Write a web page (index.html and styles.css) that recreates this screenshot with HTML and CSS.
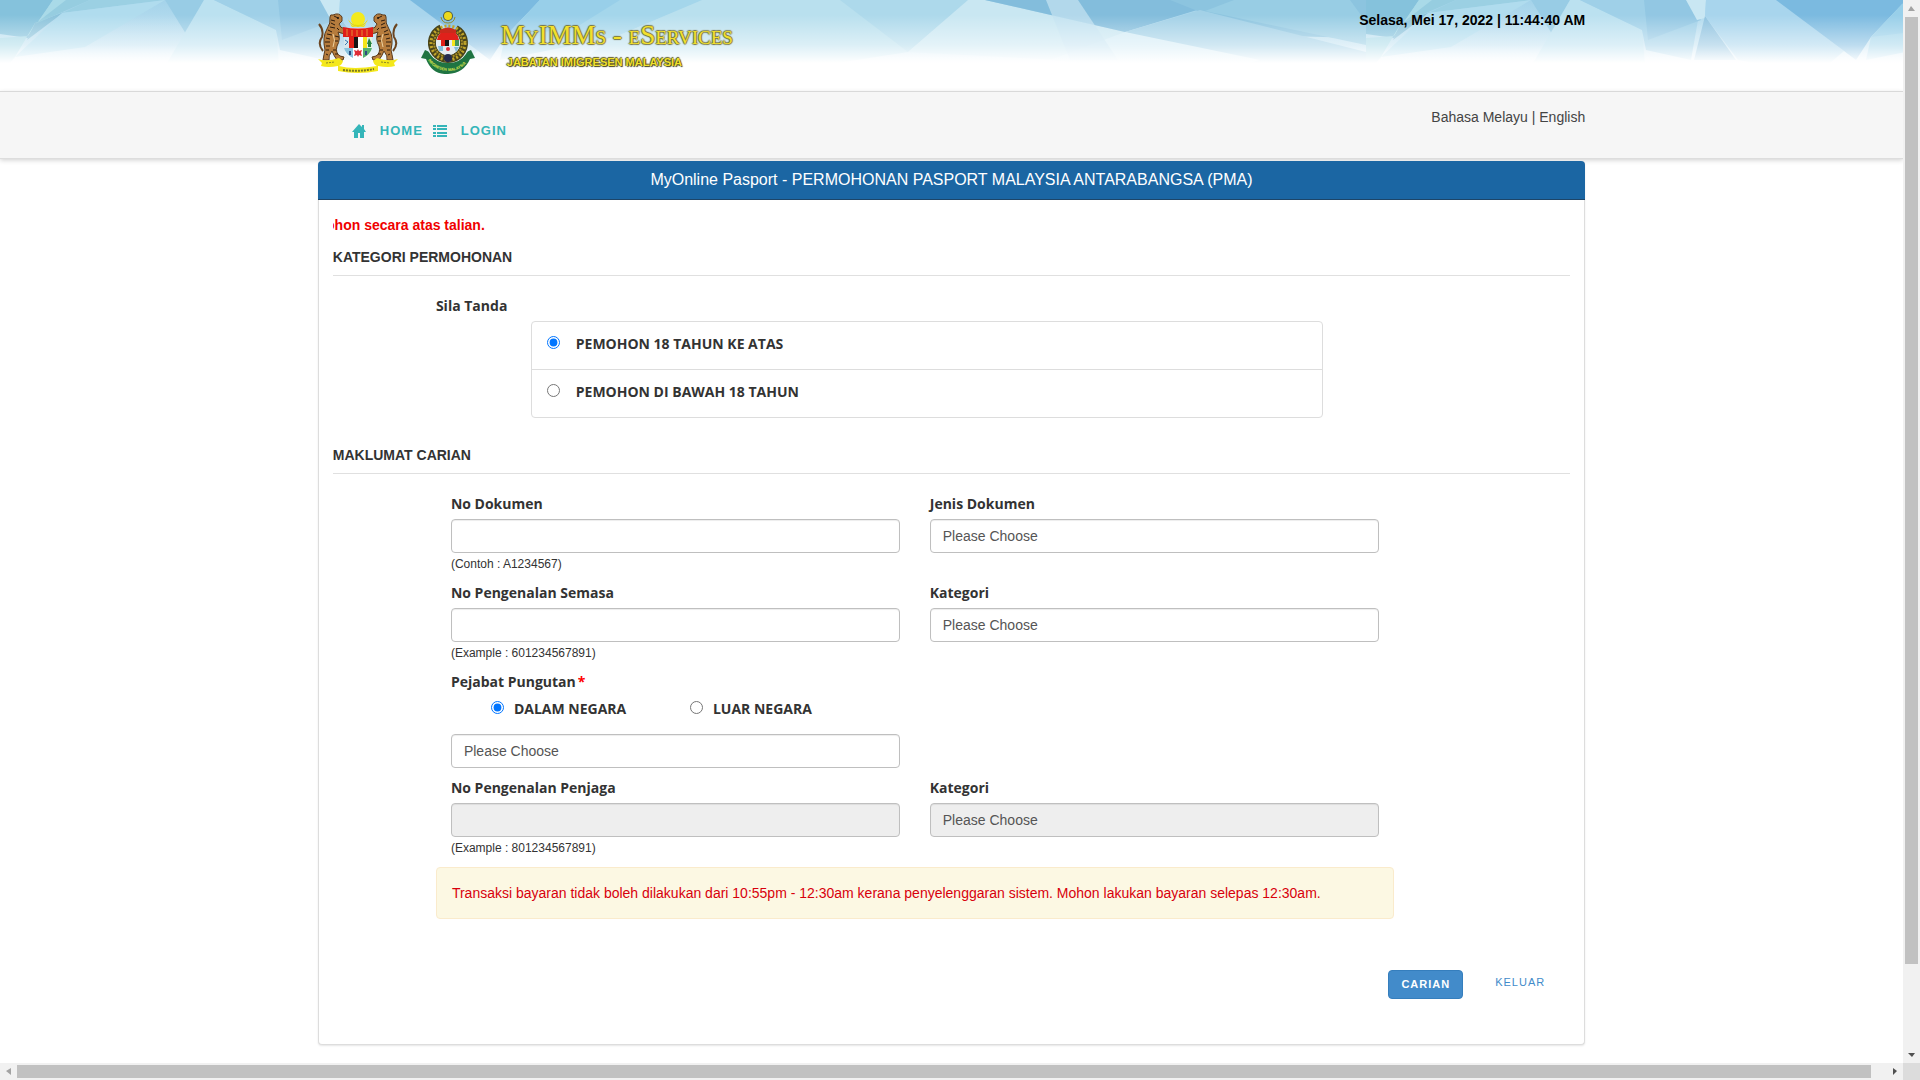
FILE: index.html
```html
<!DOCTYPE html>
<html lang="ms">
<head>
  <meta charset="utf-8">
  <title>MyIMMs - eServices</title>
  <link rel="stylesheet" href="styles.css">
</head>
<body>
<div class="window">
  <div class="page">

    <header class="banner">
      <svg class="banner-bg" width="2732" height="75" viewBox="0 0 2732 75" aria-hidden="true">
        <defs>
          <linearGradient id="sky" x1="0" y1="0" x2="0" y2="1">
            <stop offset="0" stop-color="#a4d3ea"/>
            <stop offset="0.6" stop-color="#c3e3f2"/>
            <stop offset="1" stop-color="#ffffff"/>
          </linearGradient>
          <linearGradient id="fade" x1="0" y1="0" x2="0" y2="1">
            <stop offset="0.2" stop-color="#ffffff" stop-opacity="0"/>
            <stop offset="0.6" stop-color="#ffffff" stop-opacity="0.5"/>
            <stop offset="0.84" stop-color="#ffffff" stop-opacity="1"/>
          </linearGradient>
          <g id="tile">
            <rect width="1366" height="75" fill="url(#sky)"/>
            <polygon points="0,0 53,0 28,38 0,34" fill="#85c2dc"/>
            <polygon points="53,0 66,0 90,0 35,23 15,57 0,75 0,38 28,36" fill="#a9dae8"/>
            <polygon points="35,23 64,12 27,40" fill="#8cc3db"/>
            <polygon points="66,0 90,0 35,24" fill="#96cde0"/>
            <polygon points="90,0 165,0 62,13" fill="#9bd0e3"/>
            <polygon points="62,13 165,0 85,47 15,57" fill="#b0dcee"/>
            <polygon points="165,0 204,0 186,34" fill="#98cce5"/>
            <polygon points="204,0 214,0 276,30 280,75 160,75" fill="#bbe1f0"/>
            <polygon points="214,0 320,0 332,20 325,60 280,50 276,30" fill="#9fd0e8"/>
            <polygon points="278,0 320,0 335,20 282,40" fill="#92c7e3"/>
            <polygon points="320,0 340,0 339,18 331,20" fill="#c9e7f3"/>
            <polygon points="339,16 370,60 328,60" fill="#90c3e0"/>
            <polygon points="340,0 410,0 478,51 450,75 372,60 339,16" fill="#a8d5ed"/>
            <polygon points="410,0 540,0 505,37 490,60 478,51" fill="#7bbae0"/>
            <polygon points="540,0 702,0 615,37 500,60 505,37" fill="#a4d6eb"/>
            <polygon points="540,0 620,0 575,28 505,37" fill="#98cfe9"/>
            <polygon points="702,0 968,0 908,52 760,75 560,75 615,37" fill="#b9e0ee"/>
            <polygon points="840,0 968,0 908,52" fill="#add9eb"/>
            <polygon points="968,0 985,0 1125,32 1060,60 908,52" fill="#c9e7f2"/>
            <polygon points="985,0 1230,0 1125,32" fill="#83bddc"/>
            <polygon points="1170,0 1230,0 1366,0 1366,38 1280,36 1200,12" fill="#8cc4df"/>
            <polygon points="1125,32 1200,10 1366,52 1366,75 1240,65" fill="#a3d1e7"/>
            <polygon points="1125,32 1260,60 1200,75 1050,60" fill="#d3ecf6"/>
            <polygon points="1046,0 1078,0 1118,60 1070,60" fill="#c2e2f0" opacity="0.75"/>
            <polygon points="1234,0 1350,0 1366,22 1366,45 1205,11" fill="#98cde4"/>
            <rect width="1366" height="75" fill="url(#fade)"/>
          </g>
        </defs>
        <use href="#tile"/>
        <use href="#tile" x="1366"/>
      </svg>
      <div class="container banner-row">
        <div class="brand">
          <svg class="arms" width="80" height="64" viewBox="0 0 80 64" aria-hidden="true">
            <circle cx="40" cy="9" r="7" fill="#f4ea1c"/>
            <path d="M30 7a10 10 0 0 0 20 0a10 8 0 0 1-20 0z" fill="#e7d90c"/>
            <path d="M32 14q8 6 16 0l-2 3h-12z" fill="#efe018"/>
            <!-- tigers -->
            <g id="tiger">
              <path d="M12 7Q12 4 15 5Q21 2 24 7L24 11L21 14Q22 18 27 19L29 22Q25 25 20 22Q23 29 19 36Q17 43 22 46L26 47L25 50H19Q16 46 14 41Q10 46 11 50H5Q6 44 7 40Q4 27 9 19Q13 13 12 7z" fill="#b67c3d" stroke="#5a3a1c"/>
              <path d="M16 6l4 2M13 10l4 1M13 13l4 2M12 17l5 1M10 20l4 2M9 24l5 1M8 28l4 1M7 32l5 0M8 36l4 0M8 40l3 0M8 44l2 1M15 40l3 0M17 44l3 0M19 18l2 2M17 26l4 1M17 31l3 0" stroke="#2c1b0d" stroke-width="1" fill="none"/>
              <path d="M5 41Q-1 34 4 27Q6 20 1 14" fill="none" stroke="#6b4521" stroke-width="2"/>
              <path d="M15 24q3 6 0 13" fill="none" stroke="#eed2a0" stroke-width="1"/>
              <circle cx="20" cy="8" r="1" fill="#1b120a"/>
            </g>
            <use href="#tiger" transform="matrix(-1 0 0 1 80 0)"/>
            <!-- shield -->
            <path d="M26 18h28v18q-1 12-14 17q-13-5-14-17z" fill="#fff"/>
            <path d="M25 17q15 3 30 0v10h-30z" fill="#df1d17"/>
            <path d="M29 19v7M34 20v6M39 20v6M44 20v6M49 19v7" stroke="#e58a35" stroke-width="1"/>
            <path d="M26 27h5v11h-5z" fill="#d6e6ec"/>
            <path d="M27 30l3 2-3 3" stroke="#3a7ab5" fill="none"/>
            <path d="M31 27h5v11h-5z" fill="#e02119"/>
            <path d="M36 27h4v11h-4z" fill="#151515"/>
            <path d="M45 27h4v11h-4z" fill="#f5e51b"/>
            <path d="M49 27h5v11h-5z" fill="#e3f0df"/>
            <path d="M51 28l3 6h-5zM50 34h3v3h-3z" fill="#258441"/>
            <path d="M26 38h9v10q-7-3-9-10z" fill="#8ac3df"/>
            <path d="M54 38h-9v10q7-3 9-10z" fill="#55b070"/>
            <path d="M40 39l1 2 3-1-1 3 1 3-3-1-1 2-1-2-3 1 1-3-1-3 3 1z" fill="#df2d36"/>
            <path d="M32 41v4M48 41v4" stroke="#2b4c80" stroke-width="2"/>
            <!-- scroll -->
            <path d="M0 49q9 3 21-1l4 3q-1 4-4 5q14 4 38 0q-3-1-4-5l4-3q12 4 21 1l-4 4 1 3q-7 2-17 0v5q-20 4-40 0v-5q-10 2-17 0l1-3z" fill="#f4e81b"/>
            <path d="M25 60q15 2 31-1" fill="none" stroke="#7c7822" stroke-width="2" stroke-dasharray="2 1"/>
            <path d="M8 53l9-1M63 52l9 1" stroke="#8b8728" stroke-dasharray="2 1"/>
          </svg>
          <svg class="crest" width="54" height="64" viewBox="0 0 54 64" aria-hidden="true">
            <circle cx="27" cy="6" r="5" fill="#4c5c48"/>
            <circle cx="27" cy="6" r="4" fill="#ecd91c"/>
            <path d="M20 7q1 6 7 6t7-6" fill="none" stroke="#8f8a2e" stroke-width="1"/>
            <circle cx="27" cy="33" r="16" fill="none" stroke="#4a451a" stroke-width="8" stroke-dasharray="85 16" transform="rotate(-61 27 33)"/>
            <circle cx="27" cy="33" r="17" fill="none" stroke="#c1a52a" stroke-width="3" stroke-dasharray="2 2"/>
            <circle cx="27" cy="33" r="14" fill="none" stroke="#a98f26" stroke-width="2" stroke-dasharray="2 1"/>
            <circle cx="27" cy="33" r="12" fill="#e4edf1"/>
            <path d="M16 30q1-9 11-9t11 9z" fill="#e0211b"/>
            <path d="M19 20q8-5 16 0v3h-16z" fill="#c92a1c"/>
            <path d="M20 30h4v6h-4z" fill="#e02119"/>
            <path d="M24 30h4v6h-4z" fill="#151515"/>
            <path d="M31 30h3v6h-3z" fill="#f5e51b"/>
            <path d="M34 30h4v6h-4z" fill="#43965a"/>
            <path d="M17 36h5v5h-4zM33 37h5l-3 5z" fill="#84bedb"/>
            <circle cx="27" cy="39" r="2" fill="#df2d36"/>
            <circle cx="27" cy="48" r="4" fill="#252c4d"/>
            <path d="M0 48l4-8q4 1 5 4q6 9 18 9t18-9q1-3 5-4l4 8-5 1q-6 14-22 15T5 49z" fill="#1f7442"/>
            <path id="ribbon" d="M7 50Q13 60 27 61T50 46" fill="none"/>
            <text class="crest-text"><textPath href="#ribbon">IMIGRESEN MALAYSIA</textPath></text>
          </svg>
          <div class="brand-text">
            <span class="brand-name">MyIMMs - eServices</span>
            <span class="brand-dept">JABATAN IMIGRESEN MALAYSIA</span>
          </div>
        </div>
        <div class="clock">Selasa, Mei 17, 2022 | 11:44:40 AM</div>
      </div>
    </header>

    <nav class="topnav">
      <div class="container nav-row">
        <ul class="menu">
          <li><a href="#">
            <svg width="14" height="14" viewBox="0 0 14 14" aria-hidden="true"><path d="M7 0l3 3V1h2v4l2 3h-2v6H8V9H6v5H2V8H0z" fill="currentColor"/></svg>
            HOME</a></li>
          <li><a href="#">
            <svg width="14" height="14" viewBox="0 0 14 14" aria-hidden="true"><path d="M0 1h3v2H0zM4 1h10v2H4zM0 4h3v2H0zM4 4h10v2H4zM0 8h3v2H0zM4 8h10v2H4zM0 11h3v2H0zM4 11h10v2H4z" fill="currentColor"/></svg>
            LOGIN</a></li>
        </ul>
        <div class="lang"><a href="#">Bahasa Melayu</a> | <a href="#">English</a></div>
      </div>
    </nav>

    <main class="container">
      <div class="panel">
        <h1 class="panel-heading">MyOnline Pasport - PERMOHONAN PASPORT MALAYSIA ANTARABANGSA (PMA)</h1>
        <form class="panel-body">
          <div class="ticker"><span>ohon secara atas talian.</span></div>

          <h2 class="legend">KATEGORI PERMOHONAN</h2>
          <div class="tanda">
            <span class="label">Sila Tanda</span>
          </div>
          <div class="list-group">
            <label class="list-item"><input type="radio" name="umur" checked> PEMOHON 18 TAHUN KE ATAS</label>
            <label class="list-item"><input type="radio" name="umur"> PEMOHON DI BAWAH 18 TAHUN</label>
          </div>

          <h2 class="legend">MAKLUMAT CARIAN</h2>
          <div class="fields">
            <div class="field">
              <label class="label" for="noDokumen">No Dokumen</label>
              <input class="control" type="text" id="noDokumen">
              <small class="help">(Contoh : A1234567)</small>
            </div>
            <div class="field">
              <label class="label" for="jenis">Jenis Dokumen</label>
              <select class="control" id="jenis"><option>Please Choose</option></select>
            </div>
            <div class="field">
              <label class="label" for="noSemasa">No Pengenalan Semasa</label>
              <input class="control" type="text" id="noSemasa">
              <small class="help">(Example : 601234567891)</small>
            </div>
            <div class="field">
              <label class="label" for="kategori1">Kategori</label>
              <select class="control" id="kategori1"><option>Please Choose</option></select>
            </div>
            <div class="field field-wide">
              <label class="label" for="pejabat">Pejabat Pungutan<span class="required">*</span></label>
              <div class="radios">
                <label><input type="radio" name="negara" checked> DALAM NEGARA</label>
                <label><input type="radio" name="negara"> LUAR NEGARA</label>
              </div>
              <select class="control" id="pejabat"><option>Please Choose</option></select>
            </div>
            <div class="field">
              <label class="label" for="noPenjaga">No Pengenalan Penjaga</label>
              <input class="control" type="text" id="noPenjaga" disabled>
              <small class="help">(Example : 801234567891)</small>
            </div>
            <div class="field">
              <label class="label" for="kategori2">Kategori</label>
              <select class="control" id="kategori2" disabled><option>Please Choose</option></select>
            </div>
          </div>

          <div class="alert">Transaksi bayaran tidak boleh dilakukan dari 10:55pm - 12:30am kerana penyelenggaran sistem. Mohon lakukan bayaran selepas 12:30am.</div>

          <div class="actions">
            <button type="button" class="btn btn-primary">CARIAN</button>
            <a href="#" class="btn btn-link">KELUAR</a>
          </div>
        </form>
      </div>
    </main>
  </div>

  <!-- scrollbars -->
  <div class="bar bar-v">
    <svg class="arrow" viewBox="0 0 17 17"><path d="M5 11h7L8 6z" fill="#a3a3a3"/></svg>
    <div class="track"><div class="thumb"></div></div>
    <svg class="arrow" viewBox="0 0 17 17"><path d="M5 7h7L9 11z" fill="#505050"/></svg>
  </div>
  <div class="bar bar-h">
    <svg class="arrow" viewBox="0 0 17 17"><path d="M11 5v7L6 8z" fill="#a3a3a3"/></svg>
    <div class="track"><div class="thumb"></div></div>
    <svg class="arrow" viewBox="0 0 17 17"><path d="M7 5v7l4-4z" fill="#505050"/></svg>
  </div>
  <div class="corner"></div>
</div>
</body>
</html>
```
FILE: styles.css
```css
* {
  box-sizing: border-box;
}

body {
  margin: 0;
  font-family: "Liberation Sans", Arial, sans-serif;
  font-size: 14px;
  line-height: 20px;
  color: #333;
  background-color: #fff;
}

a {
  color: inherit;
  text-decoration: none;
}

/* window with its own scrollbars */
.window {
  display: grid;
  grid-template-columns: 1fr 17px;
  grid-template-rows: 1fr 17px;
  height: 100vh;
}

.page {
  overflow: hidden;
  min-width: 0;
}

.container {
  width: 66.6%;
  margin: 0 auto;
}

/* banner */
.banner {
  position: relative;
  height: 92px;
  overflow: hidden;
  border-bottom: 1px solid #d9d9d9;
}

.banner-bg {
  position: absolute;
  top: 0;
  left: 0;
}

.banner-row {
  position: relative;
  display: flex;
  justify-content: space-between;
  padding-top: 10px;
}

.brand {
  display: flex;
}

.arms {
  margin-right: 23px;
}

.crest {
  margin-right: 26px;
}

.crest-text {
  font-size: 4px;
  font-weight: bold;
  fill: #d9e54a;
}

.brand-text {
  display: flex;
  flex-direction: column;
  padding-top: 12px;
  color: #f2e02c;
  white-space: nowrap;
}

.brand-name {
  font-family: "Liberation Serif", "Times New Roman", serif;
  font-size: 27px;
  line-height: 26px;
  font-variant: small-caps;
  text-shadow: 1px 0 1px #77753f, -1px 0 1px #77753f, 0 1px 1px #77753f, 0 -1px 1px #77753f;
}

.brand-dept {
  padding-left: 6px;
  font-size: 11px;
  line-height: 28px;
  font-weight: bold;
  text-shadow: 1px 1px 1px #3c3a16, -1px 0 1px #5a571f, 0 -1px 1px #5a571f;
}

.clock {
  color: #000;
  font-size: 14px;
  font-weight: bold;
}

/* nav */
.topnav {
  height: 67px;
  background-color: #f6f6f6;
  border-bottom: 1px solid #ddd;
  box-shadow: 0 1px 5px rgba(0, 0, 0, 0.2);
}

.nav-row {
  display: flex;
  justify-content: space-between;
  padding-top: 15px;
}

.menu {
  display: flex;
  gap: 10px;
  list-style: none;
  margin: 0;
  padding: 14px 0 0 34px;
}

.menu a {
  display: flex;
  align-items: center;
  gap: 14px;
  color: #35b5b9;
  font-size: 13px;
  font-weight: bold;
  letter-spacing: 1px;
}

.lang {
  color: #444;
}

/* panel */
.panel {
  position: relative;
  margin-top: 2px;
  border: 1px solid #ddd;
  border-top: 0;
  border-radius: 4px;
  background-color: #fff;
  box-shadow: 0 1px 2px rgba(0, 0, 0, 0.1);
}

.panel-heading {
  margin: 0 -1px;
  padding: 9px 15px;
  color: #fff;
  font-size: 16px;
  line-height: 20px;
  font-weight: normal;
  text-align: center;
  background-color: #1b66a3;
  border-bottom: 1px solid #1d4568;
  border-radius: 4px 4px 0 0;
}

.panel-body {
  padding: 15px 14px 45px;
}

.ticker {
  display: flex;
  justify-content: flex-end;
  width: 152px;
  overflow: hidden;
  color: #f00000;
  font-weight: bold;
  font-size: 14px;
  white-space: nowrap;
}

.legend {
  margin: 12px 0 20px;
  padding-bottom: 8px;
  font-size: 14px;
  line-height: 20px;
  border-bottom: 1px solid #e0e0e0;
}

.label,
.list-item,
.radios label {
  font-family: "Open Sans", sans-serif;
  font-size: 14px;
  font-weight: 700;
}

.label {
  display: block;
  margin-bottom: 5px;
}

.tanda {
  margin-left: 8.333%;
}

.list-group {
  width: 64%;
  margin: 0 0 27px 16%;
  border: 1px solid #ddd;
  border-radius: 4px;
}

.list-item {
  display: flex;
  gap: 16px;
  padding: 12px 15px 15px;
}

.list-item + .list-item {
  border-top: 1px solid #ddd;
}

input[type="radio"] {
  width: 13px;
  height: 13px;
  margin: 2px 0 0;
}

/* search fields */
.fields {
  display: grid;
  grid-template-columns: 1fr 1fr;
  gap: 10px 30px;
  width: 77.4%;
  margin-left: 8.333%;
  padding: 0 15px;
}

.field-wide {
  grid-column: 1 / 3;
}

.field-wide .control {
  width: calc(50% - 15px);
}

.control {
  display: block;
  width: 100%;
  height: 34px;
  padding: 6px 12px;
  font-family: "Liberation Sans", Arial, sans-serif;
  font-size: 14px;
  line-height: 20px;
  color: #555;
  background-color: #fff;
  border: 1px solid #bfbfbf;
  border-radius: 4px;
  box-shadow: inset 0 1px 1px rgba(0, 0, 0, 0.075);
  appearance: none;
}

.control:disabled {
  background-color: #eee;
  opacity: 1;
}

.help {
  display: block;
  padding-top: 2px;
  font-size: 12px;
  line-height: 18px;
}

.required {
  margin-left: 2px;
  color: #f00;
}

.radios {
  display: flex;
  padding: 2px 0 0 40px;
  margin-bottom: 15px;
}

.radios label {
  display: flex;
  gap: 10px;
  width: 199px;
}

.alert {
  width: 77.4%;
  margin: 10px 0 51px 8.333%;
  padding: 15px;
  color: #d8000c;
  background-color: #fcf8e3;
  border: 1px solid #faebcc;
  border-radius: 4px;
}

.actions {
  display: flex;
  justify-content: flex-end;
  gap: 20px;
  padding-right: 13px;
}

.btn {
  padding: 5px 12px;
  font-family: "Liberation Sans", Arial, sans-serif;
  font-size: 11px;
  line-height: 17px;
  letter-spacing: 1px;
}

.btn-primary {
  color: #fff;
  font-weight: bold;
  background-color: #428bca;
  border: 1px solid #357ebd;
  border-radius: 4px;
}

.btn-link {
  padding-top: 4px;
  color: #428bca;
}

/* scrollbars */
.bar {
  display: flex;
  background-color: #f1f1f1;
}

.bar-v {
  flex-direction: column;
}

.arrow {
  flex: none;
  width: 17px;
  height: 17px;
}

.track {
  flex: 1;
}

.thumb {
  background-color: #c1c1c1;
}

.bar-v .thumb {
  width: 13px;
  height: 92%;
  margin: 0 2px;
}

.bar-h .thumb {
  width: 99.2%;
  height: 13px;
  margin: 2px 0;
}

.corner {
  background-color: #dcdcdc;
}
```
